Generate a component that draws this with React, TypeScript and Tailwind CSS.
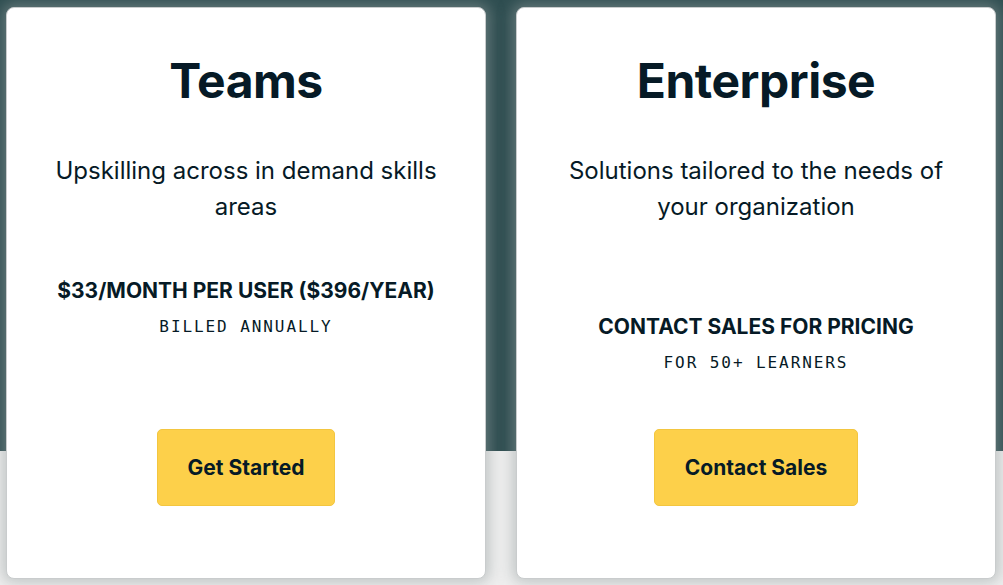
import React from "react";

const font = { fontFamily: "Inter, 'Noto Sans', sans-serif" };

function Card({
  title,
  desc,
  price,
  sub,
  cta,
  priceMt,
  btnMt,
}: {
  title: string;
  desc: React.ReactNode;
  price: string;
  sub: string;
  cta: string;
  priceMt: string;
  btnMt: string;
}) {
  return (
    <div className="flex h-[572px] w-[480px] flex-col items-center rounded-lg border border-[#c9cccd] bg-white text-center text-[#061a26] shadow-[0_0_14px_4px_rgba(150,160,160,0.5)]">
      <h2 className="mt-[49px] text-[48px] font-bold leading-[48px] tracking-[-0.01em]">{title}</h2>
      <p className="mt-[48px] text-[24px] leading-[36px] font-normal">{desc}</p>
      <div className={priceMt + " text-[21px] font-bold leading-[36px]"}>{price}</div>
      <div className="text-[16px] leading-[36px] tracking-[0.12em]" style={{ fontFamily: "'DejaVu Sans Mono', 'Liberation Mono', monospace" }}>
        {sub}
      </div>
      <button className={btnMt + " flex h-[77px] items-center rounded-[5px] border border-[#f3c640] bg-[#fdd04a] px-[30px] text-[21px] font-bold text-[#061a26]"}>
        {cta}
      </button>
    </div>
  );
}

export default function App() {
  return (
    <div
      className="flex h-[585px] w-[1003px] gap-[30px] overflow-hidden bg-[linear-gradient(to_bottom,#2f4e51_451px,#efefef_451px)] pl-[6px] pt-[7px]"
      style={font}
    >
      <Card
        title="Teams"
        desc={
          <>
            Upskilling across in demand skills
            <br />
            areas
          </>
        }
        price="$33/MONTH PER USER ($396/YEAR)"
        sub="BILLED ANNUALLY"
        cta="Get Started"
        priceMt="mt-[48px]"
        btnMt="mt-[84px]"
      />
      <Card
        title="Enterprise"
        desc={
          <>
            Solutions tailored to the needs of
            <br />
            your organization
          </>
        }
        price="CONTACT SALES FOR PRICING"
        sub="FOR 50+ LEARNERS"
        cta="Contact Sales"
        priceMt="mt-[84px]"
        btnMt="mt-[48px]"
      />
    </div>
  );
}
